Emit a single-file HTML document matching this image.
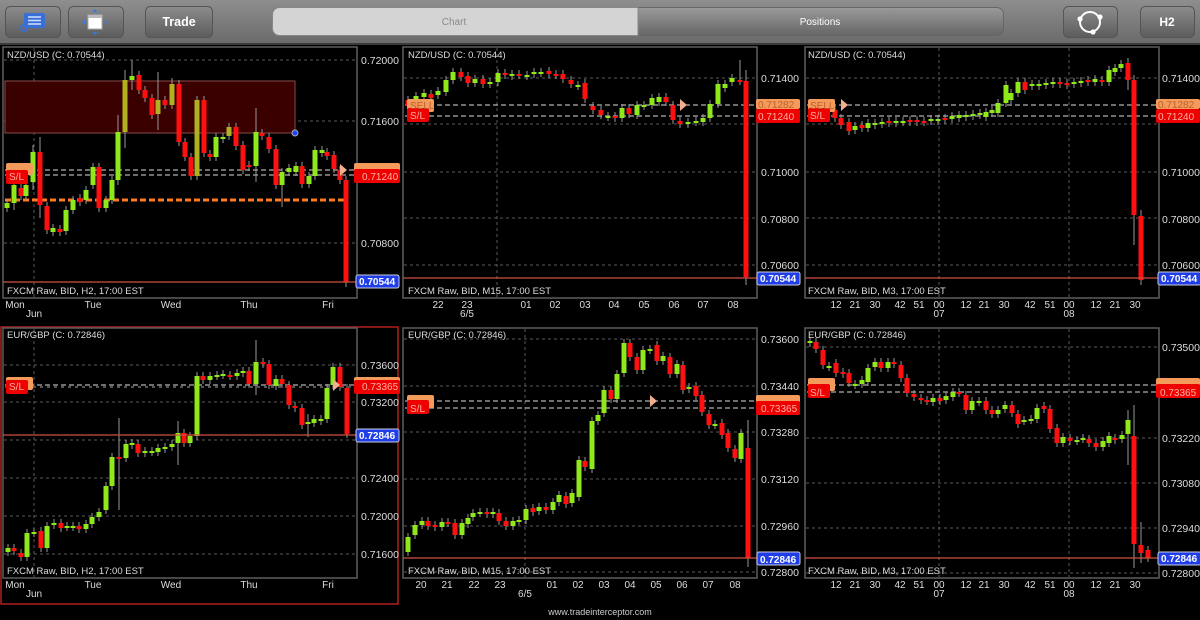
<!DOCTYPE html>
<html><head><meta charset="utf-8"><style>
html,body{margin:0;padding:0;background:#000;width:1200px;height:620px;overflow:hidden}
svg{display:block}
text{font-family:"Liberation Sans",sans-serif}
.ax{fill:#ddd;font-size:10.5px}
.tl{fill:#ddd;font-size:10px}
.ttl{fill:#ddd;font-size:9.5px}
</style></head><body>
<svg id="s" width="1200" height="620" xmlns="http://www.w3.org/2000/svg">
<defs>
<linearGradient id="bar" x1="0" y1="0" x2="0" y2="1"><stop offset="0" stop-color="#8e8e8e"/><stop offset="1" stop-color="#6a6a6a"/></linearGradient>
<linearGradient id="btn" x1="0" y1="0" x2="0" y2="1"><stop offset="0" stop-color="#8c8c8c"/><stop offset="1" stop-color="#5c5c5c"/></linearGradient>
<linearGradient id="pos" x1="0" y1="0" x2="0" y2="1"><stop offset="0" stop-color="#9a9a9a"/><stop offset="1" stop-color="#666"/></linearGradient>
</defs>
<rect x="0" y="0" width="1200" height="44" fill="url(#bar)"/>
<rect x="0" y="43" width="1200" height="2" fill="#3a3a3a"/>
<rect x="5.5" y="6.5" width="55" height="31" rx="5" fill="url(#btn)" stroke="#555"/>
<rect x="68.5" y="6.5" width="55" height="31" rx="5" fill="url(#btn)" stroke="#555"/>
<rect x="145.5" y="6.5" width="67" height="31" rx="5" fill="url(#btn)" stroke="#555"/>
<rect x="1063.5" y="6.5" width="54" height="31" rx="5" fill="url(#btn)" stroke="#555"/>
<rect x="1140.5" y="6.5" width="54" height="31" rx="5" fill="url(#btn)" stroke="#555"/>
<rect x="24" y="13" width="21" height="15" rx="2" fill="#3a6fd8"/>
<circle cx="24" cy="28" r="3" fill="none" stroke="#3a6fd8" stroke-width="2"/>
<path d="M28 17h13M28 20.5h13M28 24h13" stroke="#cfe0ff" stroke-width="1.6"/>
<rect x="88" y="15" width="14" height="14" fill="#fff" stroke="#aaa"/>
<rect x="88" y="15" width="14" height="3" fill="#bbb"/>
<path d="M95 9l-2.5 3h5zM95 35l-2.5-3h5zM82 22l3-2.5v5zM108 22l-3-2.5v5z" fill="#3a7ae0"/>
<text x="179" y="26" text-anchor="middle" fill="#fff" font-size="12.5" font-weight="bold">Trade</text>
<text x="1167" y="26" text-anchor="middle" fill="#fff" font-size="12" font-weight="bold">H2</text>
<circle cx="1090" cy="22" r="10" fill="none" stroke="#fff" stroke-width="2"/>
<circle cx="1080" cy="19" r="2.6" fill="#fff"/><circle cx="1100" cy="17" r="2.6" fill="#fff"/><circle cx="1093" cy="32" r="2.6" fill="#fff"/>
<rect x="272.5" y="7.5" width="731" height="28" rx="7" fill="url(#pos)" stroke="#666"/>
<path d="M279.5 7.5H638V35.5H279.5a7 7 0 0 1-7-7V14.5a7 7 0 0 1 7-7z" fill="#d4d4d4" stroke="#888"/>
<text x="454" y="25" text-anchor="middle" fill="#8a8a8a" font-size="10">Chart</text>
<text x="820" y="25" text-anchor="middle" fill="#fff" font-size="10">Positions</text>
<rect x="1" y="327" width="397" height="277" fill="none" stroke="#b02020" stroke-width="1.5"/>
<g id="grid" stroke="#5a5a5a" stroke-dasharray="3,3" stroke-width="1"></g>
<g id="extra"></g>
<g id="candles"></g>
<g id="frames" fill="none" stroke="#5e5e5e" stroke-width="1.5">
<rect x="3" y="47" width="354" height="251"/><rect x="403" y="47" width="354" height="251"/><rect x="805" y="47" width="354" height="251"/>
<rect x="3" y="328" width="354" height="250"/><rect x="403" y="328" width="354" height="250"/><rect x="805" y="328" width="354" height="250"/>
</g>
<g id="tags"></g>
<!-- titles -->
<text class="ttl" x="7" y="58">NZD/USD (C: 0.70544)</text>
<text class="ttl" x="408" y="58">NZD/USD (C: 0.70544)</text>
<text class="ttl" x="808" y="58">NZD/USD (C: 0.70544)</text>
<text class="ttl" x="7" y="338">EUR/GBP (C: 0.72846)</text>
<text class="ttl" x="408" y="338">EUR/GBP (C: 0.72846)</text>
<text class="ttl" x="808" y="338">EUR/GBP (C: 0.72846)</text>
<text class="ttl" x="7" y="294">FXCM Raw, BID, H2, 17:00 EST</text>
<text class="ttl" x="408" y="294">FXCM Raw, BID, M15, 17:00 EST</text>
<text class="ttl" x="808" y="294">FXCM Raw, BID, M3, 17:00 EST</text>
<text class="ttl" x="7" y="574">FXCM Raw, BID, H2, 17:00 EST</text>
<text class="ttl" x="408" y="574">FXCM Raw, BID, M15, 17:00 EST</text>
<text class="ttl" x="808" y="574">FXCM Raw, BID, M3, 17:00 EST</text>
<!-- axis labels -->
<g class="ax">
<text x="361" y="64">0.72000</text><text x="361" y="125">0.71600</text><text x="361" y="247">0.70800</text>
<text x="761" y="82">0.71400</text><text x="761" y="176">0.71000</text><text x="761" y="223">0.70800</text><text x="761" y="269">0.70600</text>
<text x="1162" y="82">0.71400</text><text x="1162" y="176">0.71000</text><text x="1162" y="223">0.70800</text><text x="1162" y="269">0.70600</text>
<text x="361" y="369">0.73600</text><text x="361" y="406">0.73200</text><text x="361" y="482">0.72400</text><text x="361" y="520">0.72000</text><text x="361" y="558">0.71600</text>
<text x="761" y="343">0.73600</text><text x="761" y="390">0.73440</text><text x="761" y="436">0.73280</text><text x="761" y="483">0.73120</text><text x="761" y="530">0.72960</text><text x="761" y="576">0.72800</text>
<text x="1162" y="351">0.73500</text><text x="1162" y="442">0.73220</text><text x="1162" y="487">0.73080</text><text x="1162" y="532">0.72940</text><text x="1162" y="577">0.72800</text>
</g>
<!-- time labels -->
<g class="tl" text-anchor="middle">
<text x="15" y="308">Mon</text><text x="34" y="317">Jun</text><text x="93" y="308">Tue</text><text x="171" y="308">Wed</text><text x="249" y="308">Thu</text><text x="328" y="308">Fri</text>
<text x="15" y="588">Mon</text><text x="34" y="597">Jun</text><text x="93" y="588">Tue</text><text x="171" y="588">Wed</text><text x="249" y="588">Thu</text><text x="328" y="588">Fri</text>
<text x="438" y="308">22</text><text x="467" y="308">23</text><text x="467" y="317">6/5</text><text x="526" y="308">01</text><text x="555" y="308">02</text><text x="585" y="308">03</text><text x="614" y="308">04</text><text x="644" y="308">05</text><text x="674" y="308">06</text><text x="703" y="308">07</text><text x="733" y="308">08</text>
<text x="421" y="588">20</text><text x="447" y="588">21</text><text x="474" y="588">22</text><text x="500" y="588">23</text><text x="525" y="597">6/5</text><text x="552" y="588">01</text><text x="578" y="588">02</text><text x="604" y="588">03</text><text x="630" y="588">04</text><text x="656" y="588">05</text><text x="682" y="588">06</text><text x="708" y="588">07</text><text x="735" y="588">08</text>
<text x="836" y="308">12</text><text x="855" y="308">21</text><text x="875" y="308">30</text><text x="900" y="308">42</text><text x="919" y="308">51</text><text x="939" y="308">00</text><text x="939" y="317">07</text><text x="966" y="308">12</text><text x="984" y="308">21</text><text x="1004" y="308">30</text><text x="1030" y="308">42</text><text x="1050" y="308">51</text><text x="1069" y="308">00</text><text x="1069" y="317">08</text><text x="1096" y="308">12</text><text x="1115" y="308">21</text><text x="1135" y="308">30</text>
<text x="836" y="588">12</text><text x="855" y="588">21</text><text x="875" y="588">30</text><text x="900" y="588">42</text><text x="919" y="588">51</text><text x="939" y="588">00</text><text x="939" y="597">07</text><text x="966" y="588">12</text><text x="984" y="588">21</text><text x="1004" y="588">30</text><text x="1030" y="588">42</text><text x="1050" y="588">51</text><text x="1069" y="588">00</text><text x="1069" y="597">08</text><text x="1096" y="588">12</text><text x="1115" y="588">21</text><text x="1135" y="588">30</text>
</g>
<text x="600" y="615" text-anchor="middle" fill="#ccc" font-size="9">www.tradeinterceptor.com</text>
<!-- static tag texts -->
<g font-size="10">
<text x="9" y="180" fill="#ffb0a0">S/L</text><text x="362" y="180" fill="#ffb0a0">0.71240</text>
<text x="410" y="109" fill="#c06030">SELL</text><text x="410" y="119" fill="#ffb0a0">S/L</text><text x="758" y="108" fill="#c06030">0.71282</text><text x="758" y="120" fill="#ffb0a0">0.71240</text>
<text x="810" y="109" fill="#c06030">SELL</text><text x="810" y="119" fill="#ffb0a0">S/L</text><text x="1158" y="108" fill="#c06030">0.71282</text><text x="1158" y="120" fill="#ffb0a0">0.71240</text>
<text x="9" y="390" fill="#ffb0a0">S/L</text><text x="362" y="390" fill="#ffb0a0">0.73365</text>
<text x="410" y="412" fill="#ffb0a0">S/L</text><text x="761" y="412" fill="#ffb0a0">0.73365</text>
<text x="810" y="396" fill="#ffb0a0">S/L</text><text x="1160" y="396" fill="#ffb0a0">0.73365</text>
</g>
<g font-size="10" font-weight="bold" fill="#fff">
<text x="359" y="285">0.70544</text><text x="760" y="282">0.70544</text><text x="1161" y="282">0.70544</text>
<text x="359" y="439">0.72846</text><text x="760" y="563">0.72846</text><text x="1161" y="562">0.72846</text>
</g>
</svg>
<script>
var NS="http://www.w3.org/2000/svg";
function el(p,t,a){var e=document.createElementNS(NS,t);for(var k in a)e.setAttribute(k,a[k]);document.getElementById(p).appendChild(e);return e;}
// grid
function hg(x1,x2,ys){ys.forEach(function(y){el("grid","line",{x1:x1,x2:x2,y1:y,y2:y});});}
function vg(y1,y2,xs){xs.forEach(function(x){el("grid","line",{x1:x,x2:x,y1:y1,y2:y2});});}
hg(4,356,[60,121,243]);vg(48,297,[34]);
hg(404,756,[78,124,172,218,265]);vg(48,297,[497]);
hg(806,1158,[78,124,172,218,265]);vg(48,297,[939,1069]);
hg(4,356,[365,402,440,478,516,554]);vg(329,577,[34]);
hg(404,756,[339,386,432,479,526,572]);vg(329,577,[525]);
hg(806,1158,[347,438,483,528,573]);vg(329,577,[939,1069]);
// top-left box
el("extra","rect",{x:5,y:81,width:290,height:52,fill:"#3a0000",stroke:"#8a4a4a"});
// candles: x,top,bottom,wickTop,wickBottom,color(g/r/o)
function cd(list){list.forEach(function(c){var col=c[5]=="g"?"#8ee81a":c[5]=="r"?"#ff1010":"#b0b020";
var wt=c[3]||c[1]-4,wb=c[4]||c[2]+4;
el("candles","line",{x1:c[0],x2:c[0],y1:wt,y2:wb,stroke:"#999","stroke-width":1});
el("candles","rect",{x:c[0]-2.5,y:c[1],width:5,height:Math.max(2,c[2]-c[1]),fill:col});});}
cd([[7,203,208,0,0,"g"],[14,185,203,180,210,"g"],[21,188,196,0,0,"r"],[26,185,196,0,0,"g"],[33,152,182,145,190,"g"],[40,152,205,137,218,"r"],[47,206,230,0,0,"r"],[53,228,232,0,0,"g"],[60,229,232,0,0,"r"],[66,210,231,0,0,"g"],[73,200,210,0,0,"g"],[80,198,202,0,0,"r"],[86,190,200,0,0,"g"],[93,167,185,0,0,"g"],[99,167,208,0,0,"r"],[106,200,208,0,0,"g"],[112,180,200,0,0,"g"],[118,132,180,115,185,"g"],[125,80,132,70,148,"o"],[132,76,80,60,90,"g"],[139,75,90,0,0,"r"],[145,90,98,0,0,"r"],[152,98,115,0,0,"r"],[158,100,114,72,130,"o"],[165,100,105,0,0,"r"],[172,84,105,78,0,"o"],[179,84,142,0,0,"r"],[185,142,157,0,0,"r"],[191,157,176,0,0,"r"],[197,100,176,0,0,"o"],[204,100,153,0,0,"r"],[210,154,157,0,0,"r"],[216,137,157,0,0,"g"],[223,137,139,0,0,"g"],[229,127,136,0,0,"o"],[236,127,146,0,0,"r"],[243,145,170,0,0,"r"],[249,165,167,0,0,"r"],[256,132,166,108,182,"g"],[262,133,136,0,0,"r"],[269,137,149,0,0,"r"],[276,149,185,0,0,"r"],[282,172,185,0,207,"g"],[289,168,172,0,0,"g"],[296,166,172,0,0,"g"],[302,166,184,0,0,"r"],[309,176,184,0,0,"g"],[315,150,176,0,0,"g"],[322,150,153,0,0,"g"],[327,152,156,0,0,"r"],[334,155,169,0,0,"r"],[340,170,180,0,0,"r"],[346,180,282,0,287,"r"]]);
cd([[408,100,106,0,0,"r"],[416,96,104,0,0,"g"],[424,93,97,0,0,"g"],[431,94,98,0,0,"r"],[438,91,95,0,0,"g"],[446,80,92,0,0,"g"],[453,72,80,0,0,"g"],[461,72,77,0,0,"r"],[468,76,83,0,0,"r"],[475,79,83,0,0,"g"],[483,79,84,0,0,"r"],[490,82,84,0,0,"g"],[498,73,82,0,0,"g"],[505,73,75,0,0,"r"],[512,74,76,0,0,"g"],[519,74,75,0,0,"r"],[527,75,76,0,0,"g"],[534,72,74,0,0,"g"],[541,72,73,0,0,"g"],[549,71,74,0,0,"r"],[556,74,75,0,0,"r"],[563,74,79,0,0,"r"],[571,80,84,0,0,"r"],[578,85,86,0,0,"g"],[585,83,99,0,0,"r"],[593,106,110,0,0,"r"],[601,110,115,0,0,"r"],[608,116,117,0,0,"g"],[615,116,118,0,0,"r"],[622,108,118,0,0,"g"],[629,108,114,0,0,"r"],[637,105,115,0,0,"g"],[644,105,106,0,0,"g"],[652,98,105,0,0,"g"],[659,97,102,0,0,"g"],[666,97,102,0,0,"r"],[673,105,120,0,0,"r"],[680,121,124,0,0,"r"],[688,122,124,0,0,"g"],[696,121,122,0,0,"g"],[703,118,122,0,0,"g"],[710,104,118,0,0,"g"],[718,84,104,0,0,"g"],[725,84,88,0,0,"g"],[732,78,82,0,0,"g"],[740,80,81,60,0,"r"],[746,81,277,70,285,"r"]]);
cd([[835,110,118,0,0,"r"],[841,118,125,0,0,"r"],[849,122,131,0,0,"r"],[855,126,130,0,0,"g"],[862,125,128,0,0,"r"],[868,123,128,0,0,"g"],[875,123,125,0,0,"g"],[882,122,124,0,0,"g"],[889,121,123,0,0,"r"],[896,121,123,0,0,"g"],[903,121,122,0,0,"g"],[910,120,122,0,0,"r"],[917,120,122,0,0,"r"],[924,121,122,0,0,"r"],[931,119,121,0,0,"g"],[938,119,121,0,0,"g"],[945,118,120,0,0,"r"],[952,116,119,0,0,"g"],[959,115,118,0,0,"g"],[966,115,117,0,0,"g"],[973,114,116,0,0,"g"],[980,113,115,0,0,"g"],[986,112,117,0,0,"g"],[992,110,113,0,0,"g"],[998,103,113,0,0,"g"],[1006,85,103,0,0,"g"],[1011,93,100,0,0,"g"],[1018,82,93,0,0,"g"],[1025,82,90,0,0,"r"],[1032,84,86,0,0,"g"],[1039,84,86,0,0,"g"],[1046,83,85,0,0,"g"],[1053,82,84,0,0,"g"],[1060,82,84,0,0,"r"],[1067,83,85,0,0,"r"],[1074,82,84,0,0,"g"],[1081,81,83,0,0,"g"],[1088,80,82,0,0,"r"],[1095,79,82,0,0,"g"],[1102,80,82,0,0,"r"],[1109,70,82,0,0,"g"],[1115,68,72,0,0,"g"],[1121,64,68,0,0,"g"],[1128,63,80,58,90,"r"],[1134,80,215,75,245,"r"],[1141,216,280,210,285,"r"]]);
cd([[8,548,552,0,0,"g"],[14,548,551,0,0,"r"],[21,553,557,0,0,"r"],[27,533,557,0,0,"g"],[34,532,533,0,0,"g"],[41,531,548,0,0,"r"],[47,526,548,0,0,"g"],[54,523,525,0,0,"g"],[61,523,528,0,0,"r"],[67,526,527,0,0,"g"],[73,526,527,0,0,"g"],[79,526,529,0,0,"r"],[86,524,529,0,0,"g"],[92,517,524,0,0,"g"],[99,512,517,0,0,"g"],[106,486,510,0,0,"g"],[112,457,486,0,0,"g"],[119,457,458,418,510,"r"],[126,444,458,0,0,"g"],[132,443,445,0,0,"g"],[138,444,453,0,0,"r"],[145,451,453,0,0,"g"],[152,451,452,0,0,"g"],[158,448,452,0,0,"g"],[165,447,449,0,0,"g"],[172,444,447,0,0,"g"],[178,433,443,421,465,"g"],[184,433,443,0,0,"r"],[190,436,443,0,0,"g"],[197,376,436,0,0,"g"],[203,376,380,0,0,"r"],[210,376,380,0,0,"g"],[217,375,376,0,0,"g"],[223,374,375,0,0,"g"],[230,375,376,0,0,"r"],[237,373,376,0,0,"g"],[243,371,373,0,0,"g"],[249,371,384,0,0,"r"],[256,362,384,340,395,"g"],[263,362,364,0,0,"r"],[269,364,385,0,0,"r"],[276,379,386,0,0,"g"],[282,379,384,0,0,"r"],[289,385,405,0,0,"r"],[295,406,408,0,0,"r"],[302,408,425,0,0,"r"],[308,422,423,414,437,"g"],[314,419,423,0,0,"g"],[321,419,421,0,0,"g"],[327,388,419,0,0,"g"],[333,367,385,0,0,"g"],[340,367,387,0,0,"r"],[347,388,434,0,0,"r"]]);
cd([[408,537,552,0,0,"g"],[415,525,535,0,0,"g"],[422,521,525,0,0,"g"],[428,521,526,0,0,"r"],[435,525,527,0,0,"r"],[442,522,527,0,0,"g"],[448,522,523,0,0,"r"],[455,523,535,0,0,"r"],[462,523,535,0,0,"g"],[468,518,524,0,0,"g"],[473,513,517,0,0,"g"],[480,512,513,0,0,"g"],[487,512,514,0,0,"r"],[493,512,514,0,0,"g"],[499,513,521,0,0,"r"],[506,521,526,0,0,"r"],[513,521,526,0,0,"g"],[519,520,521,0,0,"g"],[526,509,520,0,0,"g"],[533,508,512,0,0,"r"],[539,507,511,0,0,"g"],[546,507,510,0,0,"r"],[553,502,510,0,0,"g"],[559,495,502,0,0,"g"],[566,496,504,0,0,"r"],[572,493,503,0,0,"g"],[579,460,497,0,0,"g"],[585,461,467,0,0,"r"],[592,421,469,0,0,"g"],[598,415,421,0,0,"g"],[604,390,413,0,0,"g"],[611,390,399,0,0,"r"],[617,374,399,0,0,"g"],[624,343,373,0,0,"g"],[630,343,357,0,0,"r"],[637,357,370,0,0,"r"],[643,350,370,0,0,"g"],[650,349,350,0,0,"g"],[657,345,361,0,0,"r"],[663,356,361,0,0,"g"],[670,357,374,0,0,"r"],[677,364,374,0,0,"g"],[683,365,390,0,0,"r"],[689,387,389,0,0,"g"],[696,386,396,0,0,"r"],[702,395,412,0,0,"r"],[709,414,425,0,0,"r"],[715,424,425,0,0,"g"],[722,423,435,0,0,"r"],[728,433,448,0,0,"r"],[735,449,458,0,0,"r"],[741,433,459,0,0,"g"],[748,448,558,420,567,"r"]]);
cd([[810,341,343,0,0,"g"],[816,342,349,0,0,"r"],[823,350,365,0,0,"r"],[829,366,367,0,0,"g"],[836,363,373,0,0,"r"],[843,372,374,0,0,"r"],[849,373,383,0,0,"r"],[855,384,385,0,0,"g"],[862,380,384,0,0,"g"],[868,368,382,0,0,"g"],[875,362,367,0,0,"g"],[881,362,368,0,0,"r"],[888,362,368,0,0,"g"],[894,362,364,0,0,"r"],[901,365,378,0,0,"r"],[907,378,393,0,0,"r"],[914,394,397,0,0,"r"],[921,398,400,0,0,"r"],[927,400,401,0,0,"r"],[933,398,402,0,0,"g"],[940,398,401,0,0,"r"],[946,396,400,0,0,"g"],[953,392,397,0,0,"g"],[959,392,393,0,0,"r"],[966,395,410,0,0,"r"],[972,401,410,0,0,"g"],[979,401,402,0,0,"g"],[986,401,410,0,0,"r"],[992,410,414,0,0,"r"],[998,410,414,0,0,"g"],[1005,405,409,0,0,"g"],[1012,405,413,0,0,"r"],[1018,414,424,0,0,"r"],[1024,420,421,0,0,"g"],[1031,419,420,0,0,"g"],[1037,408,419,0,0,"g"],[1044,406,409,0,0,"r"],[1050,409,429,0,0,"r"],[1057,428,443,0,0,"r"],[1063,437,443,0,0,"g"],[1070,438,441,0,0,"r"],[1077,440,441,0,0,"g"],[1083,438,439,0,0,"g"],[1089,439,443,0,0,"r"],[1096,443,447,0,0,"r"],[1103,441,447,0,0,"g"],[1109,436,443,0,0,"g"],[1115,438,440,0,0,"r"],[1122,435,439,0,0,"g"],[1128,420,434,410,465,"g"],[1134,436,544,405,568,"r"],[1141,545,553,522,563,"r"],[1148,550,558,0,0,"r"]]);
// lines & tags
function dl(x1,x2,y,c,w,d){el("extra","line",{x1:x1,x2:x2,y1:y,y2:y,stroke:c,"stroke-width":w,"stroke-dasharray":d});}
function rl(x1,x2,y){el("tags","line",{x1:x1,x2:x2,y1:y,y2:y,stroke:"#d05040","stroke-width":1.2});}
dl(5,355,170,"#ddd",1,"5,3");dl(5,355,175,"#ddd",1,"5,3");dl(5,345,200,"#ff7a20",3,"6,3");
dl(405,757,105,"#ddd",1,"5,3");dl(405,757,116,"#ddd",1,"5,3");
dl(807,1159,105,"#ddd",1,"5,3");dl(807,1159,116,"#ddd",1,"5,3");
dl(5,357,385,"#ddd",1,"5,3");dl(5,357,387,"#aaa",1,"3,4");
dl(405,757,401,"#ddd",1,"5,3");dl(405,757,408,"#ddd",1,"5,3");
dl(807,1159,385,"#ddd",1,"5,3");dl(807,1159,392,"#ddd",1,"5,3");
el("extra","circle",{cx:295,cy:133,r:3,fill:"#2040ff",stroke:"#aaa"});
rl(3,357,282);rl(403,757,278);rl(805,1159,278);rl(3,357,435);rl(403,757,558);rl(805,1159,558);
function tag(x,y,w,h,c){el("tags","rect",{x:x,y:y,width:w,height:h,rx:2,fill:c});}
var OR="#f49a5a",RD="#ee0000";
tag(6,163,27,12,OR);tag(6,170,22,14,RD);tag(354,163,46,10,OR);tag(354,169,46,14,RD);
tag(407,99,27,13,OR);tag(407,108,22,14,RD);tag(756,99,44,10,OR);tag(756,109,44,14,RD);
tag(808,99,27,13,OR);tag(808,108,22,14,RD);tag(1156,99,44,10,OR);tag(1156,109,44,14,RD);
tag(6,377,27,13,OR);tag(6,380,22,14,RD);tag(354,377,46,8,OR);tag(354,380,46,14,RD);
tag(407,395,27,13,OR);tag(407,400,22,14,RD);tag(756,395,44,8,OR);tag(756,401,44,14,RD);
tag(808,378,27,13,OR);tag(808,384,22,14,RD);tag(1156,378,44,8,OR);tag(1156,384,44,14,RD);
function bl(x,y){el("tags","rect",{x:x,y:y,width:43,height:13,rx:2,fill:"#1f3ee8",stroke:"#ccd","stroke-width":1});}
bl(356,275);bl(757,272);bl(1158,272);bl(356,429);bl(757,552);bl(1158,552);
function tri(x,y){el("tags","path",{d:"M"+x+" "+(y-6)+"l7 6l-7 6z",fill:"#f0b090"});}
tri(340,170);tri(680,105);tri(841,105);tri(333,385);tri(650,401);
// bring texts above tags
var s=document.getElementById("s");Array.prototype.slice.call(s.querySelectorAll(":scope > g[font-size]")).forEach(function(g){s.appendChild(g);});
</script>
</body></html>
